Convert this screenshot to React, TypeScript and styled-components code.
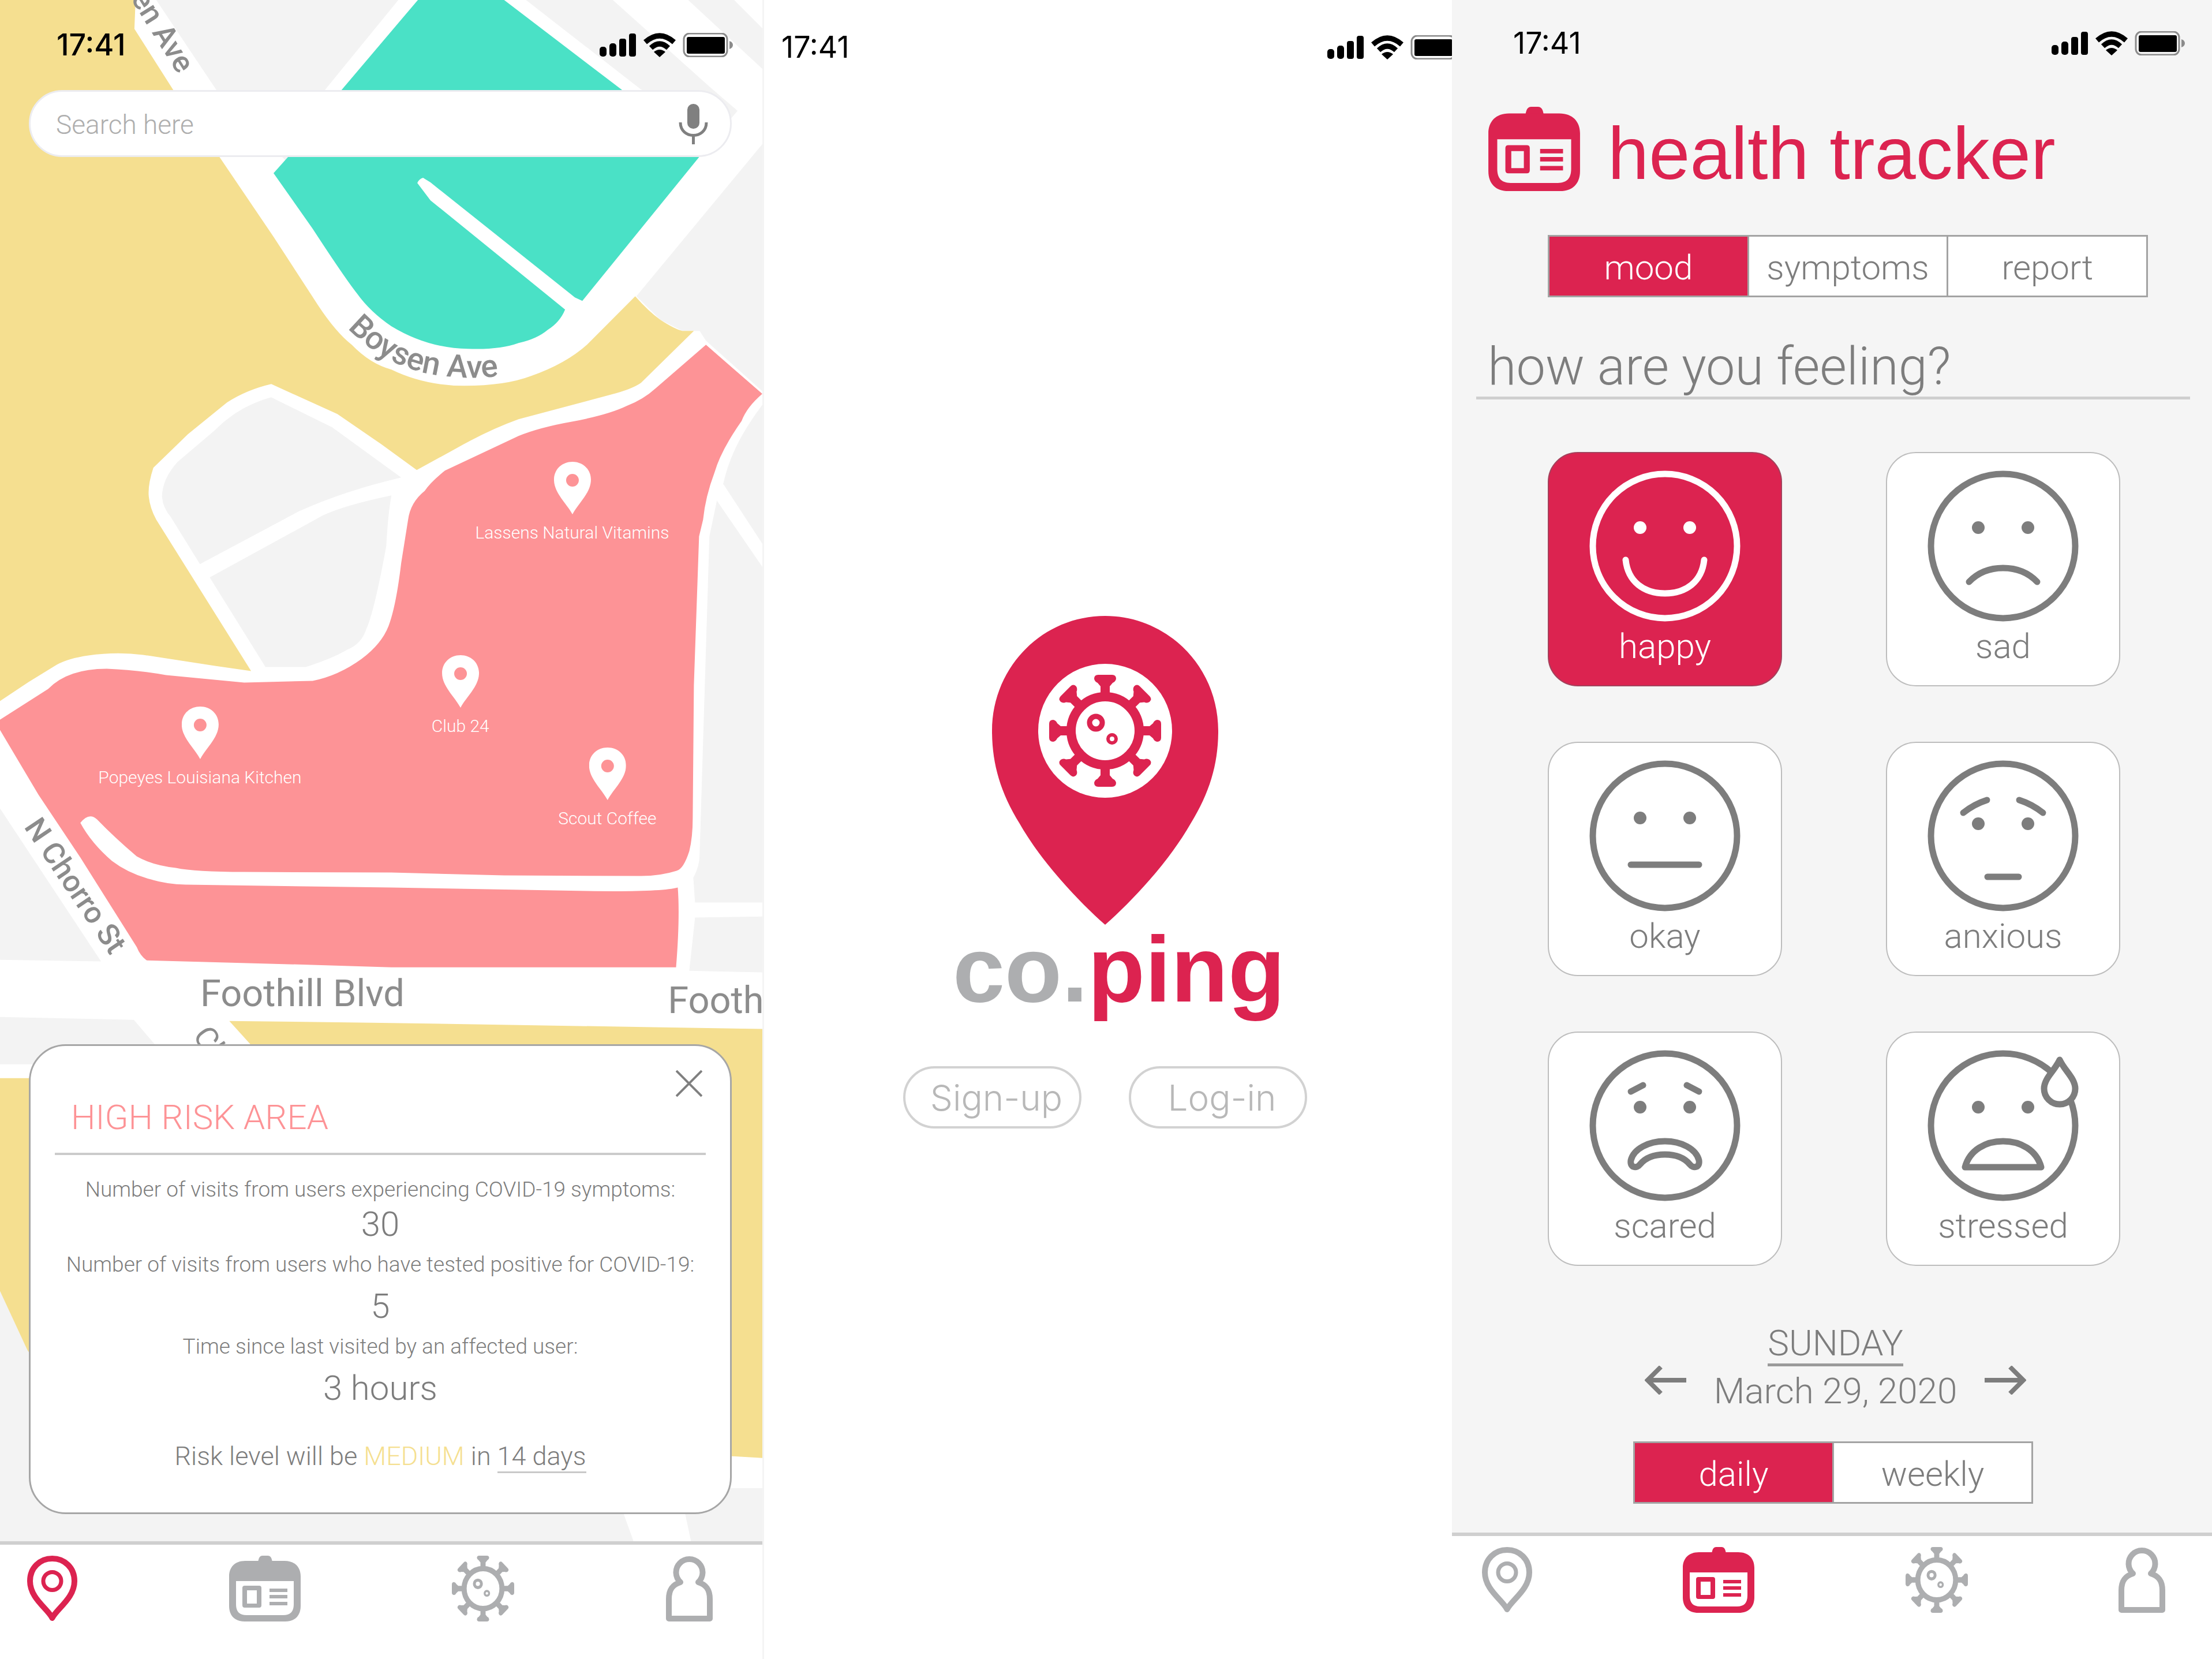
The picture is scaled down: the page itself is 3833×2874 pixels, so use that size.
import React, { useState } from "react";
import styled, { createGlobalStyle } from "styled-components";

const RED = "#dc2350";
const GREY = "#adaeb0";
const INK = "#7d7d7d";
const LIGHT = `Roboto, "Noto Sans", sans-serif`;
const SANS = `Inter, Roboto, sans-serif`;
const HELV = `"Liberation Sans", Arial, sans-serif`;

const GlobalStyle = createGlobalStyle`
  * { box-sizing: border-box; }
  body { margin: 0; background: #fff; font-family: ${LIGHT}; color: ${INK}; font-weight: 300; }
  h1, h2, p, dl, dt, dd { margin: 0; font-weight: inherit; }
  button { font: inherit; color: inherit; margin: 0; padding: 0; cursor: pointer; }
  svg { display: block; flex: none; }
`;

const Board = styled.main`
  display: grid;
  grid-template-columns: 1321fr 1195fr 1317fr;
  min-height: 100vh;
`;

const Screen = styled.section<{ $bg?: string; $divided?: boolean }>`
  display: flex;
  flex-direction: column;
  min-width: 0;
  overflow: hidden;
  border-left: ${(p) => (p.$divided ? "3px solid #f4f4f4" : "0")};
  background: ${(p) => p.$bg ?? "#fff"};
`;

/* ---------- status bar ---------- */

const StatusRow = styled.header<{ $height: number; $left: number; $right: number; $bold?: boolean }>`
  display: flex;
  flex: none;
  align-items: center;
  justify-content: space-between;
  height: ${(p) => p.$height}px;
  margin-right: ${(p) => p.$right}px;
  padding-left: ${(p) => p.$left}px;
  color: #000;
  font-family: ${SANS};
  font-size: 52px;
  line-height: 52px;
  font-weight: ${(p) => (p.$bold ? 500 : 400)};
`;

function StatusBar(props: { height: number; left: number; right: number; bold?: boolean }) {
  return (
    <StatusRow $height={props.height} $left={props.left} $right={props.right} $bold={props.bold}>
      <time>17:41</time>
      <svg width="232" height="42" viewBox="0 0 232 42" aria-label="signal, wifi, battery">
        <rect x="0" y="24" width="12" height="17" rx="5" />
        <rect x="17" y="18" width="12" height="23" rx="5" />
        <rect x="34" y="10" width="12" height="31" rx="4" />
        <rect x="51" y="1" width="12" height="40" rx="4" />
        <g fill="none" stroke="#000" strokeWidth="9">
          <path d="M79 16 Q104 -6 129 16" />
          <path d="M89 26 Q104 12 119 26" />
        </g>
        <path d="M94 33 Q104 25 114 33 L104 42 Z" />
        <rect x="146" y="1" width="75" height="40" rx="10" fill="none" stroke="#8b8b8b" strokeWidth="3" />
        <rect x="151" y="7" width="66" height="29" rx="3" />
        <path d="M225 14 Q231 16 231 21 T225 28 Z" fill="#8b8b8b" />
      </svg>
    </StatusRow>
  );
}

/* ---------- icons ---------- */

const SPIKES = [0, 45, 90, 135, 180, 225, 270, 315];

function VirusShape({ color }: { color: string }) {
  return (
    <g>
      <circle r="59" fill="none" stroke={color} strokeWidth="16" />
      <circle cx="-16" cy="-14" r="11" fill="none" stroke={color} strokeWidth="9" />
      <circle cx="12" cy="14" r="7" fill="none" stroke={color} strokeWidth="6" />
      {SPIKES.map((a) => (
        <path
          key={a}
          transform={`rotate(${a})`}
          fill={color}
          d="M-12 -97 H12 Q19 -97 19 -90 Q18 -85 13 -83 L8 -77 V-62 H-8 V-77 L-13 -83 Q-18 -85 -19 -90 Q-19 -97 -12 -97Z"
        />
      ))}
    </g>
  );
}

function PinIcon({ color }: { color: string }) {
  return (
    <svg width="87" height="114" viewBox="0 0 87 114" fill="none" stroke={color}>
      <path
        strokeWidth="10"
        strokeLinejoin="round"
        d="M43.5 108 C36 92 5 74 5 44 C5 21 22 5 43.5 5 C65 5 82 21 82 44 C82 74 51 92 43.5 108Z"
      />
      <circle cx="43.5" cy="44" r="15.5" strokeWidth="7" />
    </svg>
  );
}

function ClipboardIcon({ color, width = 124 }: { color: string; width?: number }) {
  return (
    <svg width={width} height={Math.round((width * 114) / 124)} viewBox="0 0 124 114" fill={color}>
      <path d="M50 12 C51 4 53 0 58 0 H67 C72 0 74 4 75 12 Z" />
      <path
        fillRule="evenodd"
        d="M28 9 H96 C114 9 124 20 124 36 V87 C124 104 114 114 97 114 H27 C10 114 0 104 0 87 V36 C0 20 10 9 28 9Z M12 44 V84 C12 97 18 103 30 103 H94 C106 103 112 97 112 84 V44Z"
      />
      <path
        fillRule="evenodd"
        d="M27 52 H52 Q56 52 56 56 V86 Q56 90 52 90 H27 Q23 90 23 86 V56 Q23 52 27 52Z M31 60 V83 H48 V60Z"
      />
      <path d="M70 57 H101 V63 H70Z M70 68 H101 V74 H70Z M70 80 H101 V86 H70Z" />
    </svg>
  );
}

function VirusIcon({ color }: { color: string }) {
  return (
    <svg width="108" height="114" viewBox="-97 -97 194 194" preserveAspectRatio="none">
      <VirusShape color={color} />
    </svg>
  );
}

function PersonIcon({ color }: { color: string }) {
  return (
    <svg width="81" height="114" viewBox="0 0 81 114" fill="none" stroke={color}>
      <path
        strokeWidth="10"
        strokeLinejoin="round"
        d="M5 109 V75 C5 58 12 50 25 46 A23 23 0 1 1 56 46 C69 50 76 58 76 75 V109Z"
      />
    </svg>
  );
}

/* ---------- bottom navigation ---------- */

const Nav = styled.nav<{ $height: number; $left: number; $right: number }>`
  display: flex;
  flex: none;
  justify-content: space-between;
  align-items: flex-start;
  height: ${(p) => p.$height}px;
  padding: 19px ${(p) => p.$right}px 0 ${(p) => p.$left}px;
  border-top: 6px solid #cfcfcf;
  background: #fff;
`;

const NavLink = styled.a`
  display: block;
`;

function BottomNav(props: { active: string; height: number; left: number; right: number }) {
  const tint = (name: string) => (name === props.active ? RED : GREY);
  return (
    <Nav $height={props.height} $left={props.left} $right={props.right}>
      <NavLink href="#map" aria-label="Map"><PinIcon color={tint("map")} /></NavLink>
      <NavLink href="#tracker" aria-label="Health tracker"><ClipboardIcon color={tint("tracker")} /></NavLink>
      <NavLink href="#virus" aria-label="Virus information"><VirusIcon color={tint("virus")} /></NavLink>
      <NavLink href="#profile" aria-label="Profile"><PersonIcon color={tint("profile")} /></NavLink>
    </Nav>
  );
}

/* ---------- map screen ---------- */

const MapArea = styled.div`
  position: relative;
  display: flex;
  flex: 1;
  flex-direction: column;
  overflow: hidden;
`;

const MapDrawing = styled.svg`
  position: absolute;
  inset: 0;
  width: 100%;
  height: 100%;
`;

const Overlay = styled.div`
  position: relative;
  display: flex;
  flex: 1;
  flex-direction: column;
`;

const SearchBox = styled.label`
  display: flex;
  align-items: center;
  height: 116px;
  margin: 0 53px 0 50px;
  padding: 2px 38px 0 44px;
  border: 3px solid #ececf0;
  border-radius: 58px;
  background: #fff;
`;

const SearchInput = styled.input`
  flex: 1;
  min-width: 0;
  padding: 2px 0 0;
  border: 0;
  outline: 0;
  background: transparent;
  font: 300 46px/60px ${LIGHT};
  color: ${INK};
  &::placeholder { color: #aeaeae; opacity: 1; }
`;

const Poi = styled.figure<{ $x: number; $y: number }>`
  position: absolute;
  left: ${(p) => p.$x}%;
  top: ${(p) => p.$y}%;
  display: flex;
  flex-direction: column;
  align-items: center;
  gap: 12px;
  margin: 0;
  transform: translateX(-50%);
  color: #fff;
  font-size: 30px;
  line-height: 40px;
  white-space: nowrap;
`;

const PLACES = [
  { name: "Lassens Natural Vitamins", x: 993, y: 800 },
  { name: "Club 24", x: 799, y: 1135 },
  { name: "Popeyes Louisiana Kitchen", x: 347, y: 1224 },
  { name: "Scout Coffee", x: 1054, y: 1295 },
];

const RiskCard = styled.article`
  position: relative;
  margin: auto 53px 47px 50px;
  padding: 89px 42px 69px;
  border: 3px solid #a6a6a6;
  border-radius: 64px;
  background: #fff;
  text-align: center;
`;

const RiskTitle = styled.h2`
  padding: 0 28px 26px;
  border-bottom: 4px solid #cbcbcb;
  color: #fd9396;
  font-size: 60px;
  line-height: 70px;
  text-align: left;
`;

const CloseButton = styled.button`
  position: absolute;
  top: 42px;
  right: 48px;
  border: 0;
  background: none;
`;

const Stats = styled.dl`
  display: flex;
  flex-direction: column;
  gap: 18px;
  margin: 38px -40px 0;
`;

const Stat = styled.div<{ $gap: number }>`
  display: flex;
  flex-direction: column;
  gap: ${(p) => p.$gap}px;
`;

const StatLabel = styled.dt`
  font-size: 37px;
  line-height: 44px;
  white-space: nowrap;
`;

const StatValue = styled.dd`
  font-size: 60px;
  line-height: 60px;
`;

const Forecast = styled.p`
  margin-top: 60px;
  font-size: 45px;
  line-height: 56px;
`;

const Medium = styled.span`
  color: #f5df90;
`;

const Underlined = styled.span`
  border-bottom: 3px solid #c9c9c9;
`;

const RoadNames = styled.g<{ $weight: number }>`
  font-family: Roboto, sans-serif;
  font-weight: ${(p) => p.$weight};
  fill: #8c8c8c;
`;

function MapSvg() {
  return (
    <MapDrawing viewBox="0 0 1323 2669" preserveAspectRatio="xMidYMin slice" aria-hidden="true">
      <rect width="1323" height="2669" fill="#fff" />
      <g transform="scale(0.996 1)">
        <g fill="#f3f3f3">
          <path d="M273 0 H694 L567 155 L500 280 L377 155Z" />
          <path d="M916 0 H1067 L1235 150 L1284 192 L1272 206 L1116 155Z" />
          <path d="M1198 0 H1278 L1330 52 V122Z" />
          <path d="M1330 246 L1108 513 L1150 554 L1188 573 L1218 573 L1229 590 L1330 680Z" />
          <path d="M1330 697 C1290 750 1270 790 1259 838 L1330 946Z" />
          <path d="M1248 867 L1330 986 V1563 H1210 L1207 1520 Q1218 1500 1218 1480 L1227 1187 L1235 929Z" />
          <path d="M1210 1589 L1330 1587 V1684 L1200 1681Z" />
          <path d="M0 1398 L177 1665 L0 1662Z" />
          <path d="M0 1761 L234 1766 L300 1843 H0Z" />
          <path d="M473 688 C430 700 400 720 375 745 L310 800 Q283 830 283 861 Q285 880 298 895 L349 977 L520 886 Q600 850 699 827 L579 740Z" />
          <path d="M682 858 Q600 875 562 893 L366 1000 L463 1155 H533 Q580 1140 605 1125 Q630 1115 638 1090 Q652 1060 673 946Q676 890 682 858Z" />
          <path d="M0 2233 L60 2350 V2577 H1330 V2669 H0Z" />
        </g>
        <g fill="#f5df90">
          <path d="M0 0 H237 L235 50 L302 155 L383 272 L477 410 L554 528 Q585 575 613 597 Q645 630 682 640 Q740 668 809 668 Q880 668 925 651 Q985 630 1022 597 L1106 513 Q1130 540 1150 554 Q1175 570 1188 573 H1208 L1116 663 Q1100 674 1065 683 L903 726 Q850 745 792 778 L726 814 L664 769 L588 717 L473 665 Q430 675 396 697 L328 752 L268 810 Q258 840 260 860 Q262 880 273 900 L438 1162 L375 1153 L250 1134 Q204 1128 155 1135 Q120 1140 100 1151 L51 1181 L0 1215Z" />
          <path d="M400 1768 L647 1771 L903 1775 L1330 1782 V2525 L1260 2521 V1900 H520Z" />
          <path d="M0 1867 H80 V2380 L49 2338 L0 2233Z" />
        </g>
        <path
          fill="#4ae1c6"
          d="M728 0 H878 L1082 155 L1218 271 L1014 521 L1001 515 L750 316 L737 308 Q730 310 727 317 L750 347 L984 536 Q975 558 954 571 Q935 587 903 594 Q870 606 815 604 Q745 603 682 565 Q645 540 622 508 Q600 480 545 396 L477 300 L503 271 L596 155 L699 34Z"
        />
        <path
          fill="#fd9396"
          d="M1229 597 L1327 682 Q1300 705 1291 729 Q1255 780 1244 818 Q1228 860 1224 900 L1217 929 L1208 1187 L1206 1417 Q1206 1450 1200 1474 Q1190 1505 1178 1508 Q1150 1517 1116 1517 L878 1516 L682 1511 L426 1510 Q340 1510 307 1503 Q265 1498 239 1483 Q200 1450 170 1419 Q156 1406 141 1425 Q160 1460 196 1491 Q225 1513 264 1523 Q290 1531 324 1532 L682 1537 L1022 1543 Q1150 1545 1180 1537 Q1184 1589 1177 1675 H682 L477 1669 L256 1663 Q245 1655 239 1640 L141 1485 L68 1376 L0 1262 V1247 L85 1193 Q119 1158 187 1158 Q240 1160 290 1169 L426 1182 L545 1179 Q590 1170 630 1141 Q665 1115 677 1084 Q690 1050 699 975 L711 900 Q715 870 740 850 Q750 835 775 815 L903 755 Q940 740 997 730 Q1060 718 1091 703 Q1120 692 1142 672Z"
        />
        <path d="M1086 2622 L1103 2669 H1203 L1193 2622Z" fill="#fff" />
      </g>
      <RoadNames $weight={500}>
        <text fontSize="52" transform="translate(227 -3) rotate(58)">en Ave</text>
        <path id="boysen" fill="none" d="M603 568 C653 620 710 646 778 652 S860 652 920 640" />
        <text fontSize="55"><textPath href="#boysen">Boysen Ave</textPath></text>
        <text fontSize="52" transform="translate(42 1432) rotate(56)">N Chorro St</text>
      </RoadNames>
      <RoadNames $weight={400}>
        <text fontSize="54" transform="translate(334 1793) rotate(56)">Ch</text>
        <text fontSize="65" x="348" y="1742">Foothill Blvd</text>
        <text fontSize="65" x="1158" y="1754">Footh</text>
      </RoadNames>
    </MapDrawing>
  );
}

function MapScreen() {
  return (
    <Screen>
      <MapArea>
        <MapSvg />
        {PLACES.map((p) => (
          <Poi key={p.name} $x={(p.x / 1323) * 100} $y={(p.y / 2669) * 100}>
            <svg width="64" height="91" viewBox="0 0 64 91">
              <path
                fill="#fff"
                fillRule="evenodd"
                d="M32 91 C22 72 0 54 0 31 C0 13 14 0 32 0 S64 13 64 31 C64 54 42 72 32 91Z M32 21 A11 11 0 1 0 32 43 A11 11 0 1 0 32 21Z"
              />
            </svg>
            <figcaption>{p.name}</figcaption>
          </Poi>
        ))}
        <Overlay>
          <StatusBar height={156} left={98} right={50} bold />
          <SearchBox>
            <SearchInput type="search" placeholder="Search here" aria-label="Search here" />
            <svg width="51" height="70" viewBox="0 0 51 70" aria-hidden="true">
              <rect x="15" y="0" width="21" height="43" rx="10" fill="#808080" />
              <path d="M3 32 C3 62 48 62 48 32 M25.5 55 V70" fill="none" stroke="#808080" strokeWidth="5" />
            </svg>
          </SearchBox>
          <RiskCard>
            <CloseButton aria-label="Close">
              <svg width="46" height="46" viewBox="0 0 46 46" stroke="#808080" strokeWidth="4">
                <path d="M1 1 L45 45 M45 1 L1 45" />
              </svg>
            </CloseButton>
            <RiskTitle>HIGH RISK AREA</RiskTitle>
            <Stats>
              <Stat $gap={8}>
                <StatLabel>Number of visits from users experiencing COVID-19 symptoms:</StatLabel>
                <StatValue>30</StatValue>
              </Stat>
              <Stat $gap={20}>
                <StatLabel>Number of visits from users who have tested positive for COVID-19:</StatLabel>
                <StatValue>5</StatValue>
              </Stat>
              <Stat $gap={20}>
                <StatLabel>Time since last visited by an affected user:</StatLabel>
                <StatValue>3 hours</StatValue>
              </Stat>
            </Stats>
            <Forecast>
              Risk level will be <Medium>MEDIUM</Medium> in <Underlined>14 days</Underlined>
            </Forecast>
          </RiskCard>
        </Overlay>
      </MapArea>
      <BottomNav active="map" height={205} left={47} right={86} />
    </Screen>
  );
}

/* ---------- welcome screen ---------- */

const Welcome = styled.div`
  display: flex;
  flex: 1;
  flex-direction: column;
  align-items: center;
  justify-content: center;
  padding: 0 10px 18px 0;
`;

const Wordmark = styled.h1`
  margin-left: 48px;
  color: ${GREY};
  font: 700 162px/154px ${HELV};
`;

const Ping = styled.span`
  color: ${RED};
`;

const AuthRow = styled.div`
  display: flex;
  gap: 82px;
  margin-top: 91px;
`;

const PillButton = styled.button`
  width: 309px;
  height: 108px;
  padding: 2px 0 0 14px;
  border: 4px solid #d2d2d2;
  border-radius: 54px;
  background: #fff;
  color: #b8b8b8;
  font-family: ${SANS};
  font-size: 62px;
`;

function WelcomeScreen() {
  return (
    <Screen $divided>
      <StatusBar height={164} left={30} right={-16} />
      <Welcome>
        <svg width="392" height="535" viewBox="0 0 392 535" aria-hidden="true">
          <path
            fill={RED}
            d="M196 535 C150 495 85 425 48 360 C14 305 0 255 0 199 C0 88 88 0 196 0 S392 88 392 199 C392 255 378 305 344 360 C307 425 242 495 196 535Z"
          />
          <circle cx="196" cy="199" r="116" fill="#fff" />
          <g transform="translate(196 199)"><VirusShape color={RED} /></g>
        </svg>
        <Wordmark>co.<Ping>ping</Ping></Wordmark>
        <AuthRow>
          <PillButton>Sign-up</PillButton>
          <PillButton>Log-in</PillButton>
        </AuthRow>
      </Welcome>
    </Screen>
  );
}

/* ---------- tracker screen ---------- */

const Brand = styled.div`
  display: flex;
  align-items: center;
  gap: 48px;
  margin: 34px 0 0 63px;
`;

const BrandName = styled.h1`
  padding-top: 16px;
  color: ${RED};
  font: 400 128px/132px ${HELV};
  white-space: nowrap;
`;

const Segments = styled.div<{ $margin: string }>`
  display: flex;
  margin: ${(p) => p.$margin};
  border: 3px solid #a3a3a3;
`;

const Segment = styled.button<{ $on: boolean }>`
  flex: 1;
  height: 102px;
  padding-top: 5px;
  border: 0;
  background: ${(p) => (p.$on ? RED : "#fff")};
  color: ${(p) => (p.$on ? "#fff" : INK)};
  font-size: 60px;
  line-height: 70px;
  & + & { border-left: 3px solid #a3a3a3; }
`;

const Question = styled.h2`
  margin: 62px 38px 0 42px;
  padding: 8px 0 0 20px;
  border-bottom: 5px solid #cfcfcf;
  font-size: 90px;
  line-height: 102px;
`;

const MoodGrid = styled.div`
  display: grid;
  grid-template-columns: repeat(2, 406px);
  justify-content: space-between;
  gap: 96px;
  padding: 91px 159px 0 166px;
`;

const MoodCard = styled.button<{ $on: boolean }>`
  display: flex;
  flex-direction: column;
  align-items: center;
  gap: 8px;
  height: 406px;
  padding-top: 30px;
  border: 2px solid ${(p) => (p.$on ? "#a3425c" : "#bdbdbd")};
  border-radius: 52px;
  background: ${(p) => (p.$on ? RED : "#fff")};
  color: ${(p) => (p.$on ? "#fff" : INK)};
  font-size: 60px;
  line-height: 70px;
`;

const DateRow = styled.div`
  display: flex;
  align-items: center;
  justify-content: center;
  gap: 48px;
  margin: 99px 0 0 12px;
  text-align: center;
  font-size: 62px;
  line-height: 70px;
`;

const DateText = styled.div`
  display: flex;
  flex-direction: column;
  align-items: center;
  gap: 8px;
`;

const Weekday = styled.span`
  border-bottom: 5px solid #9a9a9a;
`;

const ArrowButton = styled.button`
  padding-top: 44px;
  border: 0;
  background: none;
`;

const Spacer = styled.div`
  flex: 1;
`;

const Eyes = ({ y }: { y: number }) => (
  <g fill="currentColor" stroke="none">
    <ellipse cx="-43" cy={y} rx="11" ry="11" />
    <ellipse cx="43" cy={y} rx="11" ry="11" />
  </g>
);

const FACES: Record<string, React.ReactNode> = {
  happy: (<><Eyes y={-32} /><path d="M-68 24 C-64 62 -36 82 0 82 S64 62 68 24" /></>),
  sad: (<><Eyes y={-32} /><path d="M-59 62 Q-36 38 0 38 T59 62" /></>),
  okay: (<><Eyes y={-31} /><path d="M-59 50 H59" /></>),
  anxious: (<><Eyes y={-21} /><path d="M-69 -40 Q-50 -55 -28 -62 M69 -40 Q50 -55 28 -62 M-27 71 H27" /></>),
  scared: (
    <>
      <Eyes y={-32} />
      <path d="M-59 -59 L-38 -70 M59 -59 L38 -70" />
      <path d="M-59 60 C-54 40 -28 27 0 27 S54 40 59 60 C61 73 49 75 43 67 C34 56 20 50 0 50 S-34 56 -43 67 C-49 75 -61 73 -59 60Z" />
    </>
  ),
  stressed: (
    <>
      <Eyes y={-32} />
      <path d="M-66 72 C-58 42 -30 27 0 27 S58 42 66 72Z" />
      <path fill="#fff" d="M98 -114 C90 -96 71 -82 71 -64 A27 27 0 0 0 125 -64 C125 -82 106 -96 98 -114Z" />
    </>
  ),
};

function TrackerScreen() {
  const [tab, setTab] = useState("mood");
  const [mood, setMood] = useState("happy");
  const [range, setRange] = useState("daily");
  return (
    <Screen $bg="#f5f5f5">
      <StatusBar height={150} left={106} right={46} />
      <Brand>
        <ClipboardIcon color={RED} width={159} />
        <BrandName>health tracker</BrandName>
      </Brand>
      <Segments $margin="75px 111px 0 166px">
        {["mood", "symptoms", "report"].map((t) => (
          <Segment key={t} $on={t === tab} aria-pressed={t === tab} onClick={() => setTab(t)}>{t}</Segment>
        ))}
      </Segments>
      <Question>how are you feeling?</Question>
      <MoodGrid>
        {Object.keys(FACES).map((m) => (
          <MoodCard key={m} $on={m === mood} aria-pressed={m === mood} onClick={() => setMood(m)}>
            <svg
              width="262" height="262" viewBox="-131 -131 262 262"
              fill="none" stroke="currentColor" strokeWidth="11" strokeLinecap="round" strokeLinejoin="round"
            >
              <circle r="125" />
              {FACES[m]}
            </svg>
            {m}
          </MoodCard>
        ))}
      </MoodGrid>
      <DateRow>
        <ArrowButton aria-label="Previous day">
          <svg width="72" height="50" viewBox="0 0 72 50" fill="none" stroke={INK} strokeWidth="8">
            <path d="M72 25 H6 M28 2 L5 25 L28 48" />
          </svg>
        </ArrowButton>
        <DateText>
          <Weekday>SUNDAY</Weekday>
          <span>March 29, 2020</span>
        </DateText>
        <ArrowButton aria-label="Next day">
          <svg width="72" height="50" viewBox="0 0 72 50" fill="none" stroke={INK} strokeWidth="8">
            <path d="M0 25 H66 M44 2 L67 25 L44 48" />
          </svg>
        </ArrowButton>
      </DateRow>
      <Segments $margin="52px 310px 50px 314px">
        {["daily", "weekly"].map((r) => (
          <Segment key={r} $on={r === range} aria-pressed={r === range} onClick={() => setRange(r)}>{r}</Segment>
        ))}
      </Segments>
      <Spacer />
      <BottomNav active="tracker" height={220} left={52} right={81} />
    </Screen>
  );
}

export default function App() {
  return (
    <>
      <GlobalStyle />
      <Board>
        <MapScreen />
        <WelcomeScreen />
        <TrackerScreen />
      </Board>
    </>
  );
}
